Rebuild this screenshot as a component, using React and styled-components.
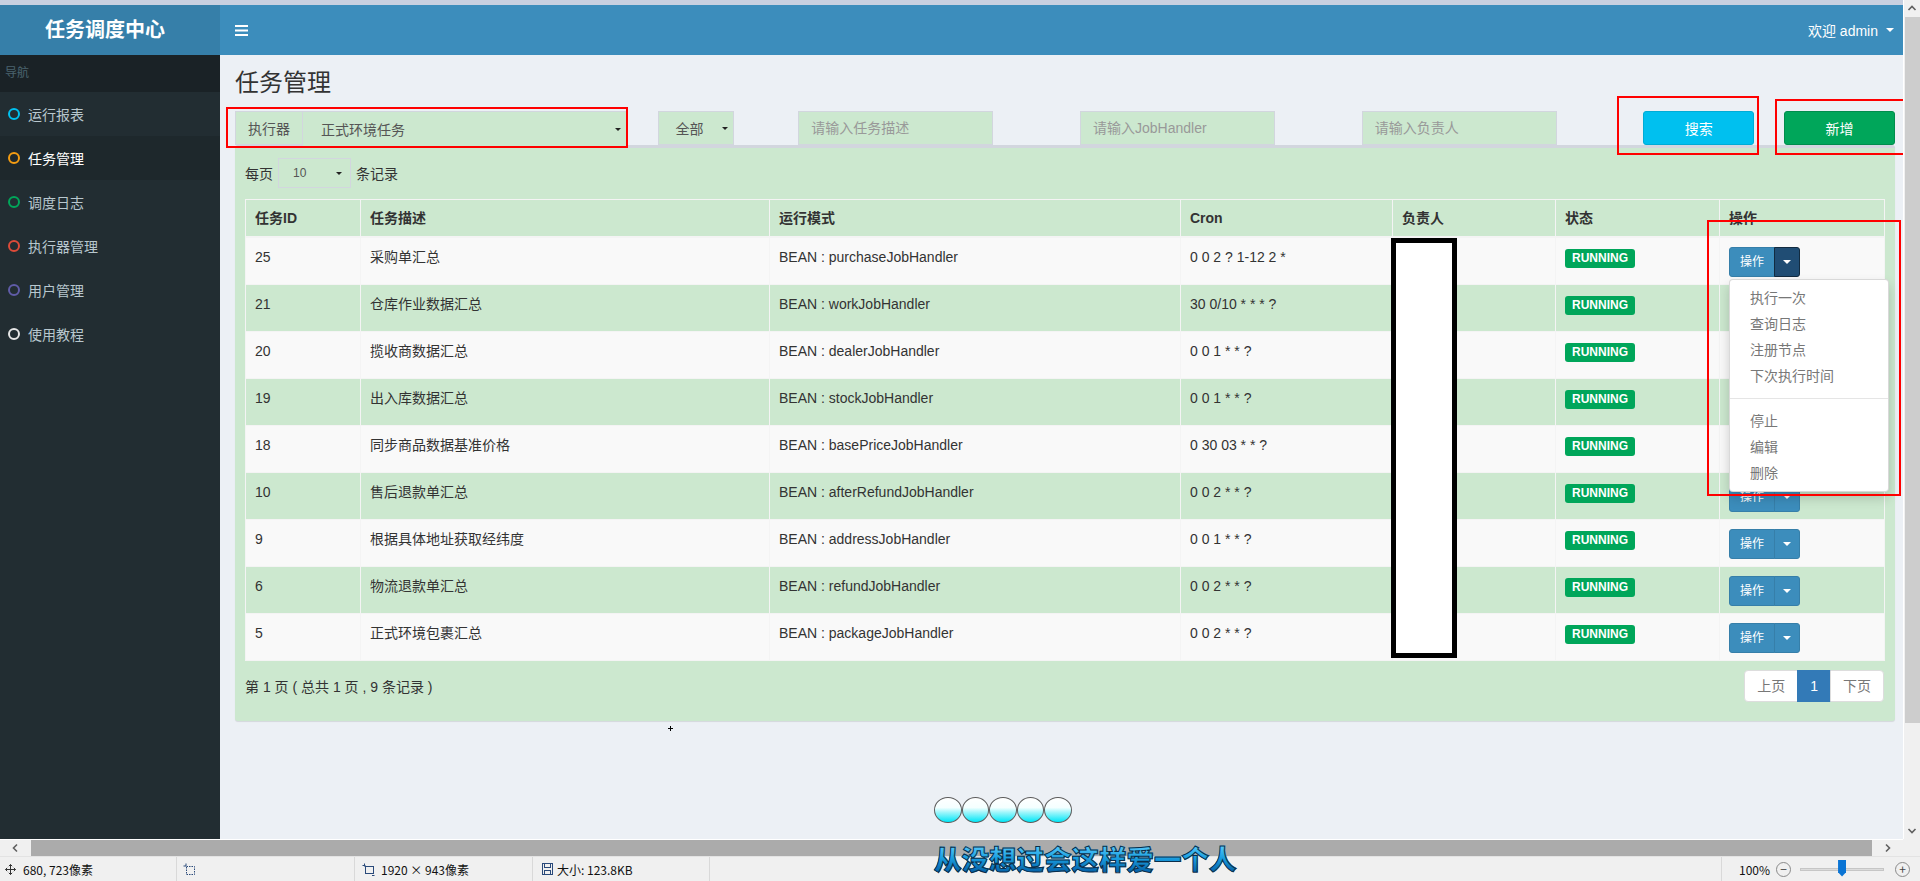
import React from "react";
import styled, { createGlobalStyle } from "styled-components";

const GlobalStyle = createGlobalStyle`
  html, body { margin: 0; padding: 0; }
  body {
    font-family: "Liberation Sans", "Noto Sans CJK SC", sans-serif;
    font-size: 14px;
    color: #333;
    overflow: hidden;
  }
  * { box-sizing: border-box; }
`;

const navItems = [
  { label: "运行报表", color: "#00c0ef" },
  { label: "任务管理", color: "#f39c12", active: true },
  { label: "调度日志", color: "#00a65a" },
  { label: "执行器管理", color: "#dd4b39" },
  { label: "用户管理", color: "#605ca8" },
  { label: "使用教程", color: "#e6e6e6" },
];

const jobs = [
  ["25", "采购单汇总", "purchaseJobHandler", "0 0 2 ? 1-12 2 *"],
  ["21", "仓库作业数据汇总", "workJobHandler", "30 0/10 * * * ?"],
  ["20", "揽收商数据汇总", "dealerJobHandler", "0 0 1 * * ?"],
  ["19", "出入库数据汇总", "stockJobHandler", "0 0 1 * * ?"],
  ["18", "同步商品数据基准价格", "basePriceJobHandler", "0 30 03 * * ?"],
  ["10", "售后退款单汇总", "afterRefundJobHandler", "0 0 2 * * ?"],
  ["9", "根据具体地址获取经纬度", "addressJobHandler", "0 0 1 * * ?"],
  ["6", "物流退款单汇总", "refundJobHandler", "0 0 2 * * ?"],
  ["5", "正式环境包裹汇总", "packageJobHandler", "0 0 2 * * ?"],
];

const colWidths = [115, 409, 411, 212, 163, 164, 165];
const headers = ["任务ID", "任务描述", "运行模式", "Cron", "负责人", "状态", "操作"];

/* ---------- screen frame (image viewer) ---------- */

const Screen = styled.div`
  position: relative;
  width: 1920px;
  height: 881px;
  display: grid;
  grid-template-columns: 1903px 17px;
  grid-template-rows: 839px 17px 25px;
  overflow: hidden;
  background: #f0f0f0;
`;

const Page = styled.div`
  position: relative;
  overflow: hidden;
  background: #ecf0f5;
  display: flex;
  flex-direction: column;
`;

const TopStrip = styled.div`
  height: 5px;
  background: #c8d0e0;
`;

const Header = styled.div`
  display: flex;
  height: 50px;
  background: #3c8dbc;
  color: #fff;
`;

const Logo = styled.div`
  width: 220px;
  background: #367fa9;
  font-size: 20px;
  font-weight: 700;
  line-height: 50px;
  text-align: center;
  padding-right: 10px;
`;

const NavBar = styled.div`
  flex: 1;
  display: flex;
  align-items: center;
  justify-content: space-between;
  padding: 0 9px 0 15px;
`;

const UserMenu = styled.div`
  display: flex;
  align-items: center;
  gap: 8px;
  font-size: 14px;
`;

const Caret = styled.span`
  display: inline-block;
  width: 0;
  height: 0;
  border-left: ${(p) => p.$size || 4}px solid transparent;
  border-right: ${(p) => p.$size || 4}px solid transparent;
  border-top: ${(p) => p.$size || 4}px solid ${(p) => p.$color || "#fff"};
`;

const Main = styled.div`
  flex: 1;
  display: flex;
  min-height: 0;
`;

const Sidebar = styled.div`
  width: 220px;
  background: #222d32;
  flex-shrink: 0;
`;

const SideHeader = styled.div`
  height: 37px;
  line-height: 37px;
  padding-left: 5px;
  font-size: 12px;
  color: #4b646f;
  background: #1a2226;
`;

const SideItem = styled.div`
  height: 44px;
  display: flex;
  align-items: center;
  gap: 8px;
  padding-left: 8px;
  font-size: 14px;
  color: ${(p) => (p.$active ? "#fff" : "#b8c7ce")};
  background: ${(p) => (p.$active ? "#1e282c" : "transparent")};
`;

const Ring = styled.span`
  width: 12px;
  height: 12px;
  border-radius: 50%;
  border: 2px solid ${(p) => p.$color};
`;

const Content = styled.div`
  flex: 1;
  min-width: 0;
  padding: 15px 15px 0;
`;

const Title = styled.h1`
  margin: 0;
  font-size: 24px;
  font-weight: 400;
  line-height: 26px;
  color: #333;
`;

/* ---------- filter row ---------- */

const FilterRow = styled.div`
  display: grid;
  grid-template-columns: repeat(12, 1fr);
  width: 1690px;
  height: 34px;
  margin: 15px 0 0 -15px;
`;

const Cell = styled.div`
  grid-column: span ${(p) => p.$span};
  padding: 0 15px;
`;

const InputGroup = styled.div`
  display: flex;
  height: 34px;
  border: 1px solid #d2d6de;
  background: #cce8cf;
  color: #555;
`;

const Addon = styled.div`
  width: 67px;
  border-right: 1px solid #d2d6de;
  display: flex;
  align-items: center;
  justify-content: center;
`;

const SelectBox = styled.div`
  display: flex;
  align-items: center;
  justify-content: space-between;
  flex: ${(p) => (p.$grow ? 1 : "none")};
  width: ${(p) => (p.$width ? `${p.$width}px` : "auto")};
  height: ${(p) => p.$height || 34}px;
  padding: 0 ${(p) => p.$padR || 6}px 0 ${(p) => p.$padL || 18}px;
  font-size: ${(p) => p.$fontSize || 14}px;
  color: #555;
  background: #cce8cf;
  border: ${(p) => (p.$bordered ? "1px solid #d2d6de" : "none")};
`;

const TextInput = styled.input`
  width: 195px;
  height: 34px;
  padding: 0 12px;
  border: 1px solid #d2d6de;
  background: #cce8cf;
  font: inherit;
  font-size: 14px;
  outline: none;
  &::placeholder { color: #999; }
`;

const ActionButton = styled.div`
  height: 34px;
  display: flex;
  align-items: center;
  justify-content: center;
  color: #fff;
  font-size: 14px;
  border-radius: 3px;
  background: ${(p) => p.$bg};
  border: 1px solid ${(p) => p.$border};
`;

/* ---------- box / table ---------- */

const Box = styled.div`
  width: 1660px;
  background: #cce8cf;
  border-top: 3px solid #d2d6de;
  border-radius: 3px;
  padding: 10px 10px 19px;
  box-shadow: 0 1px 1px rgba(0, 0, 0, 0.1);
`;

const LengthRow = styled.div`
  display: flex;
  align-items: center;
  gap: 5px;
  height: 30px;
  margin-bottom: 11px;
`;

const Table = styled.table`
  width: 1639px;
  border-collapse: collapse;
  table-layout: fixed;
  border: 1px solid #f4f4f4;
`;

const Th = styled.th`
  text-align: left;
  font-weight: 700;
  padding: 8px 9px;
  line-height: 20px;
  border: 1px solid #f4f4f4;
  border-bottom-width: 2px;
`;

const Tr = styled.tr`
  height: 47px;
  background: ${(p) => (p.$odd ? "#f9f9f9" : "transparent")};
`;

const Td = styled.td`
  padding: 9px 9px 7px;
  line-height: 20px;
  vertical-align: top;
  border: 1px solid #f4f4f4;
  white-space: nowrap;
`;

const Label = styled.span`
  display: inline-block;
  margin-top: 2px;
  height: 19px;
  line-height: 19px;
  padding: 0 7px;
  font-size: 12px;
  font-weight: 700;
  color: #fff;
  background: #00a65a;
  border-radius: 3px;
`;

const BtnGroup = styled.div`
  position: relative;
  display: inline-flex;
  height: 30px;
`;

const SmallBtn = styled.div`
  display: flex;
  align-items: center;
  justify-content: center;
  padding: 0 10px;
  font-size: 12px;
  color: #fff;
  background: #3c8dbc;
  border: 1px solid #367fa9;
  border-radius: 3px 0 0 3px;
`;

const CaretBtn = styled.div`
  width: 26px;
  margin-left: -1px;
  display: flex;
  align-items: center;
  justify-content: center;
  background: ${(p) => (p.$open ? "#204d74" : "#3c8dbc")};
  border: 1px solid ${(p) => (p.$open ? "#122b40" : "#367fa9")};
  border-radius: 0 3px 3px 0;
`;

const Menu = styled.div`
  position: absolute;
  top: 100%;
  left: 0;
  z-index: 5;
  margin-top: 2px;
  min-width: 160px;
  padding: 5px 0;
  background: #fff;
  border: 1px solid rgba(0, 0, 0, 0.15);
  border-radius: 4px;
  box-shadow: 0 6px 12px rgba(0, 0, 0, 0.175);
`;

const MenuItem = styled.div`
  padding: 3px 20px;
  line-height: 20px;
  font-size: 14px;
  color: #777;
`;

const MenuDivider = styled.div`
  height: 1px;
  margin: 9px 0;
  background: #e5e5e5;
`;

const Footer = styled.div`
  display: flex;
  align-items: center;
  justify-content: space-between;
  height: 32px;
  margin-top: 9px;
`;

const Pager = styled.div`
  display: flex;
  margin-right: 1px;
`;

const PageItem = styled.div`
  padding: 5px 12px;
  line-height: 20px;
  margin-left: -1px;
  border: 1px solid ${(p) => (p.$active ? "#337ab7" : "#ddd")};
  background: ${(p) => (p.$active ? "#337ab7" : "#fff")};
  color: ${(p) => (p.$active ? "#fff" : "#777")};
  &:first-child { border-radius: 4px 0 0 4px; }
  &:last-child { border-radius: 0 4px 4px 0; }
`;

/* ---------- overlays ---------- */

const Mark = styled.div`
  position: absolute;
  border: 2px solid #ff0000;
  pointer-events: none;
  z-index: 20;
`;

const Redact = styled.div`
  position: absolute;
  left: 1391px;
  top: 238px;
  width: 66px;
  height: 420px;
  background: #fff;
  border: 5px solid #000;
  z-index: 15;
`;

const CursorDot = styled.div`
  position: absolute;
  left: 668px;
  top: 726px;
  width: 5px;
  height: 5px;
  &::before, &::after {
    content: "";
    position: absolute;
    background: #000;
  }
  &::before { left: 2px; top: 0; width: 1px; height: 5px; }
  &::after { left: 0; top: 2px; width: 5px; height: 1px; }
`;

const Bubbles = styled.div`
  position: absolute;
  left: 934px;
  top: 797px;
  display: flex;
  z-index: 30;
`;

const Bubble = styled.span`
  width: 27.6px;
  height: 26px;
  border-radius: 50%;
  border: 1.5px solid #5c5c5c;
  background: linear-gradient(to bottom, #ffffff 0%, #f4ffff 40%, #9ef6fb 60%, #00e6f7 100%);
`;

const Lyric = styled.div`
  position: absolute;
  left: 934px;
  top: 844px;
  font-family: "Noto Sans CJK SC", sans-serif;
  font-size: 27.5px;
  font-weight: 900;
  line-height: 28px;
  letter-spacing: 0;
  background: linear-gradient(to bottom, #5fd0ff 0%, #1a9ee0 50%, #0562a8 100%);
  -webkit-background-clip: text;
  background-clip: text;
  -webkit-text-fill-color: transparent;
  -webkit-text-stroke: 1px #0c2e4a;
  z-index: 30;
`;

/* ---------- scrollbars / status ---------- */

const VScroll = styled.div`
  display: flex;
  flex-direction: column;
  background: #f0f0f0;
  border-left: 1px solid #fff;
`;

const ScrollBtn = styled.div`
  width: ${(p) => p.$w || 16}px;
  height: ${(p) => p.$h || 17}px;
  display: flex;
  align-items: center;
  justify-content: center;
  flex-shrink: 0;
`;

const VThumb = styled.div`
  height: 706px;
  margin-left: 1px;
  background: #cdcdcd;
`;

const Spacer = styled.div`
  flex: 1;
`;

const HScroll = styled.div`
  display: flex;
  background: #f0f0f0;
  border-top: 1px solid #fff;
`;

const HThumb = styled.div`
  flex: 1;
  background: #ababab;
`;

const Corner = styled.div`
  background: #f0f0f0;
`;

const StatusBar = styled.div`
  grid-column: 1 / span 2;
  display: flex;
  align-items: center;
  background: #f0f0f0;
  border-top: 1px solid #e3e3e3;
  font-family: "Noto Sans CJK SC", sans-serif;
  font-size: 12px;
  color: #111;
`;

const StatusSeg = styled.div`
  width: ${(p) => p.$w}px;
  height: 100%;
  display: flex;
  align-items: center;
  gap: ${(p) => p.$gap || 7}px;
  padding-left: ${(p) => p.$pl || 5}px;
  border-right: 1px solid #d9d9d9;
`;

const ZoomCtl = styled.div`
  flex: 1;
  height: 100%;
  display: flex;
  align-items: center;
  padding-left: 17px;
  border-left: 1px solid #d9d9d9;
  margin-left: 1011px;
`;

const RoundBtn = styled.span`
  width: 15px;
  height: 15px;
  border-radius: 50%;
  border: 1px solid #8a8a8a;
  display: flex;
  align-items: center;
  justify-content: center;
  font-size: 12px;
  line-height: 1;
  color: #444;
  margin-left: ${(p) => p.$ml}px;
`;

const Track = styled.div`
  position: relative;
  width: 84px;
  height: 3px;
  margin-left: 9px;
  background: #dcdcdc;
  border: 1px solid #c6c6c6;
`;

const Knob = styled.div`
  position: absolute;
  left: 37px;
  top: -9px;
  width: 8px;
  height: 17px;
  background: #0a74d4;
  clip-path: polygon(0 0, 100% 0, 100% 75%, 50% 100%, 0 75%);
`;

const Chevron = ({ dir }) => {
  const d = {
    up: "M1.5 6 L5 2.5 L8.5 6",
    down: "M1.5 3 L5 6.5 L8.5 3",
    left: "M6 1.5 L2.5 5 L6 8.5",
    right: "M3 1.5 L6.5 5 L3 8.5",
  }[dir];
  return (
    <svg width="10" height="10" viewBox="0 0 10 10">
      <path d={d} fill="none" stroke="#606060" strokeWidth="1.6" />
    </svg>
  );
};

const MoveIcon = () => (
  <svg width="11" height="11" viewBox="0 0 11 11">
    <path d="M5.5 0.5 V10.5 M0.5 5.5 H10.5" stroke="#333" strokeWidth="1" />
    <path d="M3.8 2.2 L5.5 0.5 L7.2 2.2 M3.8 8.8 L5.5 10.5 L7.2 8.8 M2.2 3.8 L0.5 5.5 L2.2 7.2 M8.8 3.8 L10.5 5.5 L8.8 7.2" fill="none" stroke="#333" strokeWidth="1" />
  </svg>
);

const SelectIcon = () => (
  <svg width="13" height="13" viewBox="0 0 13 13">
    <path d="M3 0.5 V3 M0.5 3 H3" stroke="#2a4a7a" strokeWidth="1" />
    <rect x="3.5" y="3.5" width="8" height="8" fill="none" stroke="#2a4a7a" strokeWidth="1" strokeDasharray="1.5 1" />
  </svg>
);

const SizeIcon = () => (
  <svg width="13" height="13" viewBox="0 0 13 13">
    <path d="M2.5 0.5 V3.5 M0.5 2.5 H3.5" stroke="#2a4a7a" strokeWidth="1" />
    <rect x="3.5" y="3.5" width="8" height="7" fill="none" stroke="#2a4a7a" strokeWidth="1" />
    <path d="M10 12.5 H12.5" stroke="#2a4a7a" strokeWidth="1" />
  </svg>
);

const SaveIcon = () => (
  <svg width="11" height="12" viewBox="0 0 11 12">
    <rect x="0.5" y="0.5" width="10" height="11" fill="none" stroke="#2a4a7a" strokeWidth="1" />
    <rect x="2.5" y="0.5" width="6" height="4" fill="none" stroke="#2a4a7a" strokeWidth="1" />
    <rect x="2.5" y="7.5" width="6" height="4" fill="none" stroke="#2a4a7a" strokeWidth="1" />
  </svg>
);

const Hamburger = () => (
  <svg width="13" height="11" viewBox="0 0 13 11">
    <rect x="0" y="0" width="13" height="2" fill="#fff" />
    <rect x="0" y="4.5" width="13" height="2" fill="#fff" />
    <rect x="0" y="9" width="13" height="2" fill="#fff" />
  </svg>
);

const OpsCell = ({ open }) => (
  <BtnGroup>
    <SmallBtn>操作</SmallBtn>
    <CaretBtn $open={open}>
      <Caret />
    </CaretBtn>
    {open && (
      <Menu>
        <MenuItem>执行一次</MenuItem>
        <MenuItem>查询日志</MenuItem>
        <MenuItem>注册节点</MenuItem>
        <MenuItem>下次执行时间</MenuItem>
        <MenuDivider />
        <MenuItem>停止</MenuItem>
        <MenuItem>编辑</MenuItem>
        <MenuItem>删除</MenuItem>
      </Menu>
    )}
  </BtnGroup>
);

export default function App() {
  return (
    <>
      <GlobalStyle />
      <Screen>
        <Page>
          <TopStrip />
          <Header>
            <Logo>任务调度中心</Logo>
            <NavBar>
              <Hamburger />
              <UserMenu>
                欢迎 admin
                <Caret />
              </UserMenu>
            </NavBar>
          </Header>
          <Main>
            <Sidebar>
              <SideHeader>导航</SideHeader>
              {navItems.map((item) => (
                <SideItem key={item.label} $active={item.active}>
                  <Ring $color={item.color} />
                  {item.label}
                </SideItem>
              ))}
            </Sidebar>
            <Content>
              <Title>任务管理</Title>
              <FilterRow>
                <Cell $span={3}>
                  <InputGroup>
                    <Addon>执行器</Addon>
                    <SelectBox $grow>
                      正式环境任务
                      <Caret $color="#222" $size={3.5} />
                    </SelectBox>
                  </InputGroup>
                </Cell>
                <Cell $span={1}>
                  <SelectBox $width={76} $padL={17} $padR={5} $bordered>
                    全部
                    <Caret $color="#222" $size={3.5} />
                  </SelectBox>
                </Cell>
                <Cell $span={2}>
                  <TextInput placeholder="请输入任务描述" readOnly />
                </Cell>
                <Cell $span={2}>
                  <TextInput placeholder="请输入JobHandler" readOnly />
                </Cell>
                <Cell $span={2}>
                  <TextInput placeholder="请输入负责人" readOnly />
                </Cell>
                <Cell $span={1}>
                  <ActionButton $bg="#00c0ef" $border="#00acd6">搜索</ActionButton>
                </Cell>
                <Cell $span={1}>
                  <ActionButton $bg="#00a65a" $border="#008d4c">新增</ActionButton>
                </Cell>
              </FilterRow>

              <Box>
                <LengthRow>
                  每页
                  <SelectBox $width={73} $height={30} $padL={14} $padR={8} $fontSize={12} $bordered>
                    10
                    <Caret $color="#222" $size={3} />
                  </SelectBox>
                  条记录
                </LengthRow>
                <Table>
                  <colgroup>
                    {colWidths.map((w, i) => (
                      <col key={i} style={{ width: w }} />
                    ))}
                  </colgroup>
                  <thead>
                    <tr>
                      {headers.map((h) => (
                        <Th key={h}>{h}</Th>
                      ))}
                    </tr>
                  </thead>
                  <tbody>
                    {jobs.map(([id, desc, handler, cron], i) => (
                      <Tr key={id} $odd={i % 2 === 0}>
                        <Td>{id}</Td>
                        <Td>{desc}</Td>
                        <Td>BEAN : {handler}</Td>
                        <Td>{cron}</Td>
                        <Td />
                        <Td>
                          <Label>RUNNING</Label>
                        </Td>
                        <Td>
                          <OpsCell open={i === 0} />
                        </Td>
                      </Tr>
                    ))}
                  </tbody>
                </Table>
                <Footer>
                  <span>第 1 页 ( 总共 1 页 , 9 条记录 )</span>
                  <Pager>
                    <PageItem>上页</PageItem>
                    <PageItem $active>1</PageItem>
                    <PageItem>下页</PageItem>
                  </Pager>
                </Footer>
              </Box>
            </Content>
          </Main>

          <Redact />
          <Mark style={{ left: 226, top: 107, width: 402, height: 41 }} />
          <Mark style={{ left: 1617, top: 96, width: 142, height: 59 }} />
          <Mark style={{ left: 1775, top: 99, width: 150, height: 56 }} />
          <Mark style={{ left: 1707, top: 220, width: 194, height: 276 }} />
          <CursorDot />
        </Page>

        <VScroll>
          <ScrollBtn>
            <Chevron dir="up" />
          </ScrollBtn>
          <VThumb />
          <Spacer />
          <ScrollBtn>
            <Chevron dir="down" />
          </ScrollBtn>
        </VScroll>

        <HScroll>
          <ScrollBtn $w={31} $h={16}>
            <Chevron dir="left" />
          </ScrollBtn>
          <HThumb />
          <ScrollBtn $w={31} $h={16}>
            <Chevron dir="right" />
          </ScrollBtn>
        </HScroll>
        <Corner />

        <StatusBar>
          <StatusSeg $w={177}>
            <MoveIcon />
            680, 723像素
          </StatusSeg>
          <StatusSeg $w={178} $pl={6}>
            <SelectIcon />
          </StatusSeg>
          <StatusSeg $w={178} $pl={7} $gap={6}>
            <SizeIcon />
            1920 × 943像素
          </StatusSeg>
          <StatusSeg $w={177} $pl={9} $gap={4}>
            <SaveIcon />
            大小: 123.8KB
          </StatusSeg>
          <ZoomCtl>
            100%
            <RoundBtn $ml={6}>−</RoundBtn>
            <Track>
              <Knob />
            </Track>
            <RoundBtn $ml={11}>+</RoundBtn>
          </ZoomCtl>
        </StatusBar>

        <Bubbles>
          {[0, 1, 2, 3, 4].map((n) => (
            <Bubble key={n} />
          ))}
        </Bubbles>
        <Lyric>从没想过会这样爱一个人</Lyric>
      </Screen>
    </>
  );
}
